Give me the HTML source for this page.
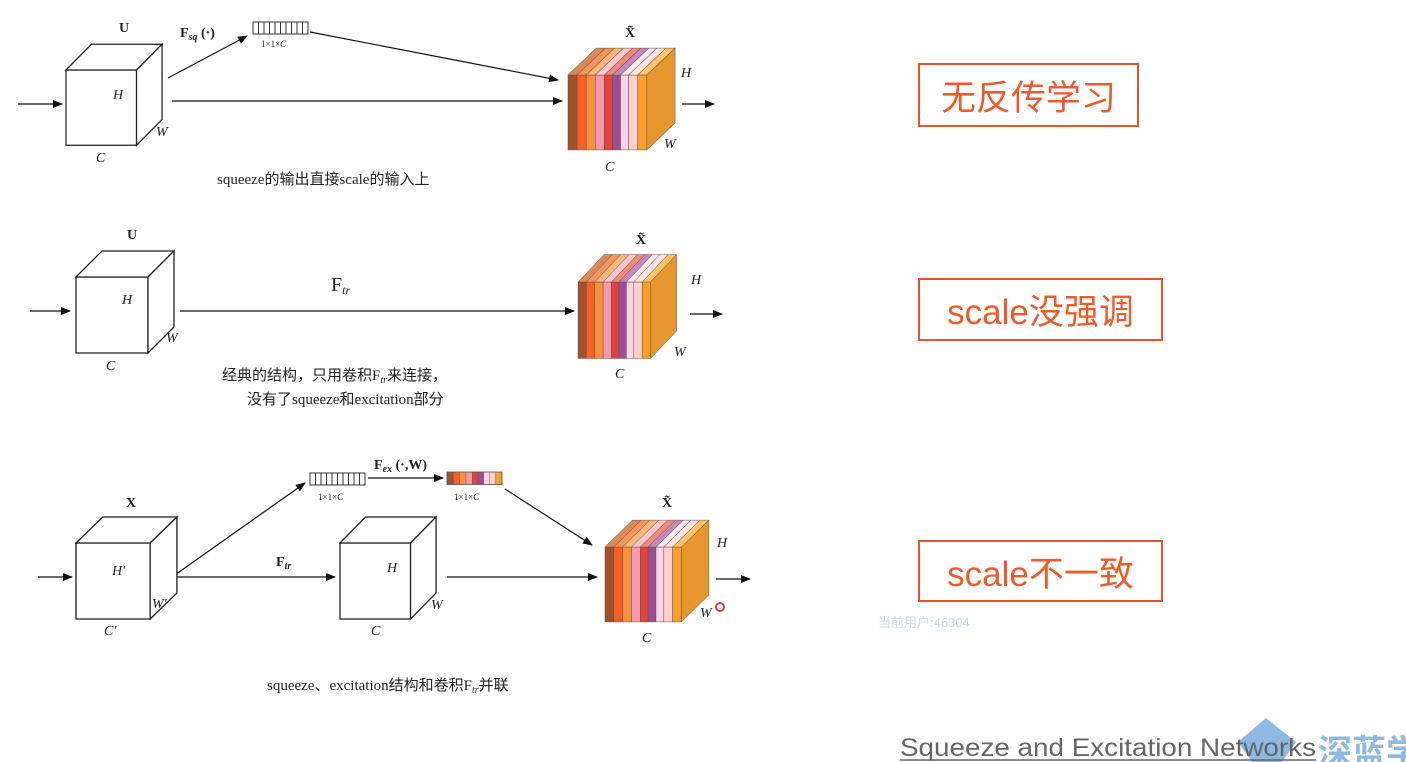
<!DOCTYPE html>
<html><head><meta charset="utf-8"><style>
html,body{margin:0;padding:0;background:#fff;width:1406px;height:762px;overflow:hidden}
svg{position:absolute;left:0;top:0}
.box{position:absolute;border:2px solid #e8532a;color:#f05a28;font-family:"Liberation Sans","Noto Sans CJK SC",sans-serif;font-size:35px;display:flex;align-items:center;justify-content:center;box-sizing:border-box}
</style></head><body>
<svg width="1406" height="762" viewBox="0 0 1406 762" font-family="Liberation Serif, serif">
<defs>
<marker id="a" markerWidth="10" markerHeight="8" refX="9" refY="4" orient="auto" markerUnits="userSpaceOnUse"><path d="M0,0 L10,4 L0,8 Z" fill="#111"/></marker>
<g id="wc" fill="#fff" stroke="#222" stroke-width="1.3">
<path d="M0,0 L72,0 L72,76 L0,76 Z"/><path d="M0,0 L26,-26 L98,-26 L72,0 Z"/><path d="M72,0 L98,-26 L98,50 L72,76 Z"/>
</g>
<g id="stripes" stroke="#6b4a3a" stroke-width="0.5">
<rect x="0" y="0" width="9" height="78" fill="#a0522d"/>
<rect x="9" y="0" width="9" height="78" fill="#f4622a"/>
<rect x="18" y="0" width="9" height="78" fill="#f7913a"/>
<rect x="27" y="0" width="9" height="78" fill="#f49ab0"/>
<rect x="36" y="0" width="8" height="78" fill="#e0443a"/>
<rect x="44" y="0" width="8" height="78" fill="#9b4f96"/>
<rect x="52" y="0" width="8" height="78" fill="#f9d6e4"/>
<rect x="60" y="0" width="9" height="78" fill="#fbd0d0"/>
<rect x="69" y="0" width="9" height="78" fill="#f9a02a"/>
</g>
<g id="cc">
<use href="#stripes"/>
<g stroke="#6b4a3a" stroke-width="0.5">
<path d="M0,0 L9,0 L37,-28 L28,-28Z" fill="#d98a5a"/>
<path d="M9,0 L18,0 L46,-28 L37,-28Z" fill="#f7955f"/>
<path d="M18,0 L27,0 L55,-28 L46,-28Z" fill="#f9b87a"/>
<path d="M27,0 L36,0 L64,-28 L55,-28Z" fill="#f8c6d0"/>
<path d="M36,0 L44,0 L72,-28 L64,-28Z" fill="#ee8a7a"/>
<path d="M44,0 L52,0 L80,-28 L72,-28Z" fill="#c08ac0"/>
<path d="M52,0 L60,0 L88,-28 L80,-28Z" fill="#fce8f0"/>
<path d="M60,0 L69,0 L97,-28 L88,-28Z" fill="#fde4e4"/>
<path d="M69,0 L78,0 L106,-28 L97,-28Z" fill="#fbc46a"/>
<path d="M78,0 L106,-28 L106,50 L78,78 Z" fill="#e6962e"/>
</g></g>
<g id="bar" fill="#fff" stroke="#333" stroke-width="1"><rect x="0" y="0" width="55" height="12"/>
<path d="M5.5,0V12M11,0V12M16.5,0V12M22,0V12M27.5,0V12M33,0V12M38.5,0V12M44,0V12M49.5,0V12"/></g>
</defs>
<g stroke="#111" stroke-width="1.2" fill="none" marker-end="url(#a)">
<path d="M18,104 L62,104"/><path d="M168,78 L247,36"/><path d="M172,101 L562,101"/><path d="M310,32 L558,80"/><path d="M682,104 L714,104"/>
<path d="M30,311 L70,311"/><path d="M180,311 L574,311"/><path d="M690,314 L722,314"/>
<path d="M38,577 L72,577"/><path d="M172,577 L305,483"/><path d="M172,577 L335,577"/><path d="M368,478 L443,478"/><path d="M505,489 L592,545"/><path d="M447,577 L597,577"/><path d="M716,579 L750,579"/>
</g>
<use href="#wc" transform="translate(66,70) scale(0.98,0.99)"/>
<use href="#cc" transform="translate(568,75) scale(1.01,0.96)"/>
<use href="#bar" x="253" y="22"/>
<use href="#wc" transform="translate(76,277)"/>
<use href="#cc" transform="translate(578,282) scale(0.93,0.98)"/>
<use href="#wc" transform="translate(76,543) scale(1.03,1)"/>
<use href="#wc" transform="translate(340,543) scale(0.98,1)"/>
<use href="#bar" x="310" y="473"/>
<use href="#stripes" transform="translate(447,472) scale(0.705,0.16)"/>
<rect x="447" y="472" width="55" height="12.5" fill="none" stroke="#555" stroke-width="0.8"/>
<use href="#cc" transform="translate(605,547) scale(0.98,0.96)"/>
<circle cx="720" cy="607" r="4" fill="none" stroke="#e33" stroke-width="2"/>
<g font-size="14" fill="#222">
<text x="119" y="32" font-weight="bold">U</text>
<text x="113" y="99" font-style="italic">H</text><text x="156" y="136" font-style="italic">W</text><text x="96" y="162" font-style="italic">C</text>
<text x="180" y="37" font-weight="bold">F<tspan font-size="10" font-style="italic" dy="3">sq</tspan><tspan dy="-3"> (·)</tspan></text>
<text x="261" y="47" font-size="9">1×1×<tspan font-style="italic">C</tspan></text>
<text x="625" y="37" font-weight="bold">X̃</text>
<text x="681" y="77" font-style="italic">H</text><text x="664" y="148" font-style="italic">W</text><text x="605" y="171" font-style="italic">C</text>
<text x="127" y="239" font-weight="bold">U</text>
<text x="122" y="304" font-style="italic">H</text><text x="166" y="342" font-style="italic">W</text><text x="106" y="370" font-style="italic">C</text>
<text x="331" y="291" font-size="20">F<tspan font-size="12" font-style="italic" dy="3">tr</tspan></text>
<text x="636" y="244" font-weight="bold">X̃</text>
<text x="691" y="284" font-style="italic">H</text><text x="674" y="356" font-style="italic">W</text><text x="615" y="378" font-style="italic">C</text>
<text x="126" y="507" font-weight="bold">X</text>
<text x="112" y="575" font-style="italic">H′</text><text x="152" y="608" font-style="italic">W′</text><text x="104" y="635" font-style="italic">C′</text>
<text x="276" y="566" font-weight="bold">F<tspan font-size="10" font-style="italic" dy="3">tr</tspan></text>
<text x="318" y="500" font-size="9">1×1×<tspan font-style="italic">C</tspan></text>
<text x="374" y="469" font-weight="bold">F<tspan font-size="10" font-style="italic" dy="3">ex</tspan><tspan dy="-3"> (·,W)</tspan></text>
<text x="454" y="500" font-size="9">1×1×<tspan font-style="italic">C</tspan></text>
<text x="387" y="572" font-style="italic">H</text><text x="431" y="609" font-style="italic">W</text><text x="371" y="635" font-style="italic">C</text>
<text x="662" y="507" font-weight="bold">X̃</text>
<text x="717" y="547" font-style="italic">H</text><text x="700" y="617" font-style="italic">W</text><text x="642" y="642" font-style="italic">C</text>
</g>
<g font-family="Liberation Serif, Noto Sans CJK SC, sans-serif" font-size="15" fill="#222">
<text x="217" y="184">squeeze的输出直接scale的输入上</text>
<text x="222" y="380">经典的结构，只用卷积F<tspan font-size="10" font-style="italic" dy="3">tr</tspan><tspan dy="-3">来连接，</tspan></text>
<text x="247" y="404">没有了squeeze和excitation部分</text>
<text x="267" y="690">squeeze、excitation结构和卷积F<tspan font-size="10" font-style="italic" dy="3">tr</tspan><tspan dy="-3">并联</tspan></text>
</g>
<text x="878" y="627" font-family="Liberation Sans, Noto Sans CJK SC, sans-serif" font-size="13" fill="#c5daf2">当前用户:46304</text>
<path d="M1238,742 L1266,718 L1296,742 L1282,762 L1252,762 Z" fill="#8fb8e2"/>
<text x="900" y="756" font-family="Liberation Sans, sans-serif" font-size="25" fill="#666" textLength="416" lengthAdjust="spacingAndGlyphs">Squeeze and  Excitation Networks</text>
<line x1="900" y1="760" x2="1316" y2="760" stroke="#666" stroke-width="1.5"/>
<text x="1318" y="764" font-family="Liberation Sans, Noto Sans CJK SC, sans-serif" font-size="34" font-weight="bold" fill="#8fb8e2">深蓝学</text>
</svg>
<div class="box" style="left:918px;top:63px;width:221px;height:64px">无反传学习</div>
<div class="box" style="left:918px;top:278px;width:245px;height:63px">scale没强调</div>
<div class="box" style="left:918px;top:540px;width:245px;height:62px">scale不一致</div>
</body></html>
